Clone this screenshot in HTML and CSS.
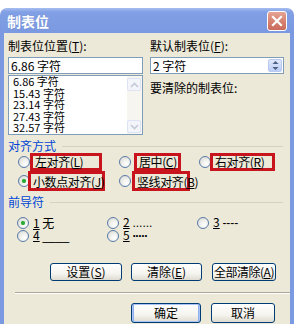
FILE: index.html
```html
<!DOCTYPE html>
<html lang="zh-CN">
<head>
    <meta charset="UTF-8">
    <title>制表位</title>
    <link rel="stylesheet" href="styles.css">
</head>
<body>
<div class="window">
    <div class="titlebar">
        <span class="title">制表位</span>
        <span class="close">
            <svg width="12" height="12" viewBox="0 0 12 12"><path d="M2 2 L10 10 M10 2 L2 10" stroke="#fff" stroke-width="2.2" stroke-linecap="square"/></svg>
        </span>
    </div>
    <div class="dialog">
        <div class="top">
            <div class="col">
                <div class="label">制表位位置(<u>T</u>):</div>
                <div class="field">6.86 字符</div>
                <div class="list">
                    <div class="items">
                        <div>6.86 字符</div>
                        <div>15.43 字符</div>
                        <div>23.14 字符</div>
                        <div>27.43 字符</div>
                        <div>32.57 字符</div>
                    </div>
                    <div class="scroll">
                        <span class="sbtn"><svg width="9" height="6" viewBox="0 0 9 6"><path d="M1 5 L4.5 1.5 L8 5" fill="none" stroke="#c3c9d6" stroke-width="1.6"/></svg></span>
                        <span class="sbtn"><svg width="9" height="6" viewBox="0 0 9 6"><path d="M1 1 L4.5 4.5 L8 1" fill="none" stroke="#c3c9d6" stroke-width="1.6"/></svg></span>
                    </div>
                </div>
            </div>
            <div class="col">
                <div class="label">默认制表位(<u>F</u>):</div>
                <div class="field spin">
                    <span>2 字符</span>
                    <span class="spinbtn"><svg width="7" height="11" viewBox="0 0 7 11"><path d="M0.5 4 L3.5 1 L6.5 4 Z M0.5 7 L3.5 10 L6.5 7 Z" fill="#4d6185"/></svg></span>
                </div>
                <div class="label clear-label">要清除的制表位:</div>
            </div>
        </div>

        <div class="group-head">对齐方式</div>
        <div class="align-rows">
            <div class="cell"><span class="radio"></span><span class="mark w-left">左对齐(<u>L</u>)</span></div>
            <div class="cell"><span class="radio"></span><span class="mark w-center">居中(<u>C</u>)</span></div>
            <div class="cell"><span class="radio"></span><span class="mark w-right">右对齐(<u>R</u>)</span></div>
            <div class="cell tall"><span class="radio checked"></span><span class="mark w-decimal">小数点对齐(<u>J</u>)</span></div>
            <div class="cell tall"><span class="radio"></span><span class="mark w-bar">竖线对齐(<u>B</u>)</span></div>
        </div>

        <div class="group-head leader-head">前导符</div>
        <div class="leader-rows">
            <div class="lcell"><span class="radio checked"></span><span><u>1</u> 无</span></div>
            <div class="lcell"><span class="radio"></span><span><u>2</u> <span class="lead">......</span></span></div>
            <div class="lcell"><span class="radio"></span><span><u>3</u> <span class="lead">----</span></span></div>
            <div class="lcell"><span class="radio"></span><span><u>4</u> <span class="lead">____</span></span></div>
            <div class="lcell"><span class="radio"></span><span><u>5</u> <b class="lead dots">·····</b></span></div>
        </div>

        <div class="btnrow">
            <button class="btn b-set">设置(<u>S</u>)</button>
            <button class="btn b-clear">清除(<u>E</u>)</button>
            <button class="btn b-all">全部清除(<u>A</u>)</button>
        </div>
        <div class="sep"></div>
        <div class="btnrow bottom">
            <button class="btn default">确定</button>
            <button class="btn b-cancel">取消</button>
        </div>
    </div>
</div>
</body>
</html>
```

FILE: styles.css
```css
body {
    margin: 0;
    background-color: #fff;
    font-family: "Noto Sans CJK SC", sans-serif;
    font-size: 12px;
    color: #000;
}
u {
    text-decoration: underline;
    text-underline-offset: 1px;
}
.window {
    margin-top: 8px;
    padding: 0 4px;
    border-radius: 7px 7px 0 0;
    background: linear-gradient(to bottom, #a6bdf0 0px, #819fe4 4px, #7b99e0 25px, #7c9ae2 100%);
}
.titlebar {
    height: 25px;
    display: flex;
    align-items: center;
    justify-content: space-between;
    padding: 0 3px;
}
.title {
    color: #fff;
    font-weight: bold;
    font-size: 14px;
    line-height: 16px;
    text-shadow: 0 0 1px #6c86c8;
}
.close {
    width: 18px;
    height: 18px;
    border: 1px solid #fff;
    border-radius: 3px;
    background: linear-gradient(to bottom, #e6a494, #d57d6c 60%, #c96a5c);
    display: flex;
    align-items: center;
    justify-content: center;
}
.dialog {
    background-color: #ece9d8;
    height: 291px;
    box-sizing: border-box;
    padding: 6px 6px 0 4px;
    overflow: hidden;
}
.top {
    display: grid;
    grid-template-columns: 135px 134px;
    column-gap: 7px;
}
.label {
    height: 14px;
    line-height: 14px;
    white-space: nowrap;
}
.field {
    margin-top: 4px;
    height: 17px;
    box-sizing: border-box;
    border: 1px solid #7f9db9;
    background-color: #fff;
    line-height: 15px;
    padding-left: 2px;
}
.spin {
    display: flex;
    justify-content: space-between;
    padding-right: 1px;
}
.spinbtn {
    width: 14px;
    height: 13px;
    margin-top: 1px;
    box-sizing: border-box;
    border: 1px solid #b7c9f3;
    border-radius: 2px;
    background: linear-gradient(to bottom, #dfe8fc, #bccdf5);
    display: flex;
    align-items: center;
    justify-content: center;
}
.list {
    margin-top: 1px;
    height: 60px;
    box-sizing: border-box;
    border: 1px solid #7f9db9;
    background-color: #fff;
    display: flex;
    overflow: hidden;
}
.items {
    flex: 1;
    padding-left: 4px;
    font-size: 11px;
    line-height: 11.6px;
}
.scroll {
    width: 15px;
    background-color: #f6f5f0;
    display: flex;
    flex-direction: column;
    justify-content: space-between;
    padding: 2px 0 1px;
}
.sbtn {
    width: 14px;
    height: 13px;
    box-sizing: border-box;
    border: 1px solid #dbe3f5;
    border-radius: 2px;
    background-color: #f3f5fb;
    display: flex;
    align-items: center;
    justify-content: center;
}
.clear-label {
    margin-top: 7px;
}
.group-head {
    margin-top: 5px;
    height: 12px;
    line-height: 12px;
    color: #0046d5;
    display: flex;
    align-items: center;
    gap: 6px;
    padding-right: 1px;
}
.group-head::after {
    content: "";
    flex: 1;
    height: 1px;
    background-color: #d5d2c1;
}
.align-rows {
    margin-top: 1px;
    display: grid;
    grid-template-columns: 101px 80px 1fr;
    grid-template-rows: 18px 20px;
    padding-left: 10px;
}
.cell {
    display: flex;
    align-items: center;
    height: 18px;
}
.cell.tall {
    height: 20px;
}
.radio {
    flex: none;
    width: 12px;
    height: 12px;
    box-sizing: border-box;
    border: 1px solid #587aa8;
    border-radius: 50%;
    background: radial-gradient(circle at 65% 70%, #fff 0, #f1f1ee 40%, #d6d5cc 100%);
    display: flex;
    align-items: center;
    justify-content: center;
}
.radio.checked::after {
    content: "";
    width: 4px;
    height: 4px;
    border-radius: 50%;
    background-color: #2fa83a;
    box-shadow: 0 0 1px #5fd26a;
}
.mark {
    flex: none;
    box-sizing: border-box;
    height: 100%;
    border: 3px solid #c8141c;
    padding: 0 0 0 2px;
    line-height: 12px;
    white-space: nowrap;
    letter-spacing: -0.4px;
}
.w-left {
    width: 72px;
}
.w-center {
    width: 47px;
    margin-left: 3px;
}
.w-right {
    width: 65px;
    margin-left: -1px;
}
.w-decimal {
    width: 77px;
    margin-left: -2px;
    padding-top: 2px;
}
.w-bar {
    width: 58px;
    margin-left: 1px;
    padding-top: 2px;
}
.leader-head {
    margin-top: 5px;
}
.leader-rows {
    margin-top: 8px;
    display: grid;
    grid-template-columns: 90px 90px 1fr;
    grid-auto-rows: 13px;
    padding-left: 9px;
}
.lcell {
    display: flex;
    align-items: center;
    gap: 4px;
    line-height: 13px;
    white-space: nowrap;
}
.lead {
    font-family: "Liberation Sans", sans-serif;
}
.dots {
    font-weight: bold;
    letter-spacing: -1px;
}
.btnrow {
    margin-top: 21px;
    display: flex;
    justify-content: flex-end;
    gap: 9px;
    padding-right: 8px;
}
.btn {
    height: 18px;
    box-sizing: border-box;
    border: 1px solid #003c74;
    border-radius: 3px;
    background: linear-gradient(to bottom, #ffffff, #f5f4ef 60%, #dedbd0);
    font-family: "Noto Sans CJK SC", sans-serif;
    font-size: 12px;
    line-height: 14px;
    padding: 0;
    color: #000;
    white-space: nowrap;
}
.b-set {
    width: 72px;
}
.b-clear {
    width: 71px;
}
.b-all {
    width: 64px;
    margin-left: 1px;
    letter-spacing: -0.5px;
}
.sep {
    margin: 11px -6px 0 7px;
    height: 0;
    border-top: 1px solid #aca899;
    border-bottom: 1px solid #fff;
}
.bottom {
    margin-top: 9px;
    gap: 10px;
    padding-right: 9px;
}
.bottom .btn {
    height: 20px;
    width: 70px;
}
.bottom .b-cancel {
    width: 64px;
}
.btn.default {
    box-shadow: inset 0 0 0 1px #a9c4f5, inset 2px 0 0 #8eb0ee, inset -2px 0 0 #8eb0ee;
}
```
